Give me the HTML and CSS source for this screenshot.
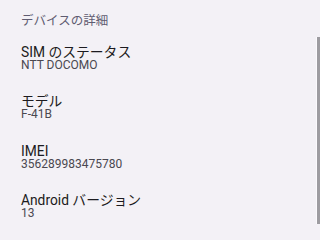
FILE: index.html
```html
<!DOCTYPE html>
<html lang="ja">
<head>
<meta charset="utf-8">
<link rel="stylesheet" href="styles.css">
</head>
<body>
<div class="screen">
  <div class="header">デバイスの詳細</div>
  <div class="item">
    <div class="title">SIM のステータス</div>
    <div class="sub">NTT DOCOMO</div>
  </div>
  <div class="item">
    <div class="title">モデル</div>
    <div class="sub">F-41B</div>
  </div>
  <div class="item">
    <div class="title">IMEI</div>
    <div class="sub">356289983475780</div>
  </div>
  <div class="item">
    <div class="title">Android バージョン</div>
    <div class="sub">13</div>
  </div>
  <div class="scrollbar"></div>
</div>
</body>
</html>
```
FILE: styles.css
```css
html, body {
  margin: 0;
  padding: 0;
  background: #f3f1f6;
}
.screen {
  position: relative;
  width: 100%;
  height: 240px;
  overflow: hidden;
  font-family: Roboto, "Noto Sans CJK JP", sans-serif;
}
.header {
  padding: 14px 21px 0;
  line-height: 13px;
  font-size: 12.5px;
  color: #5f5c71;
}
.item {
  padding: 18px 21px 4.33px;
}
.title {
  font-size: 13.8px;
  line-height: 14px;
  color: #1c1b20;
}
.sub {
  font-size: 12px;
  line-height: 13px;
  color: #4a4850;
}
.scrollbar {
  position: absolute;
  right: 0;
  top: 37px;
  width: 3.5px;
  height: 187px;
  background: #9d9ca1;
  border-left: 1px solid #fbfafd;
}
```
